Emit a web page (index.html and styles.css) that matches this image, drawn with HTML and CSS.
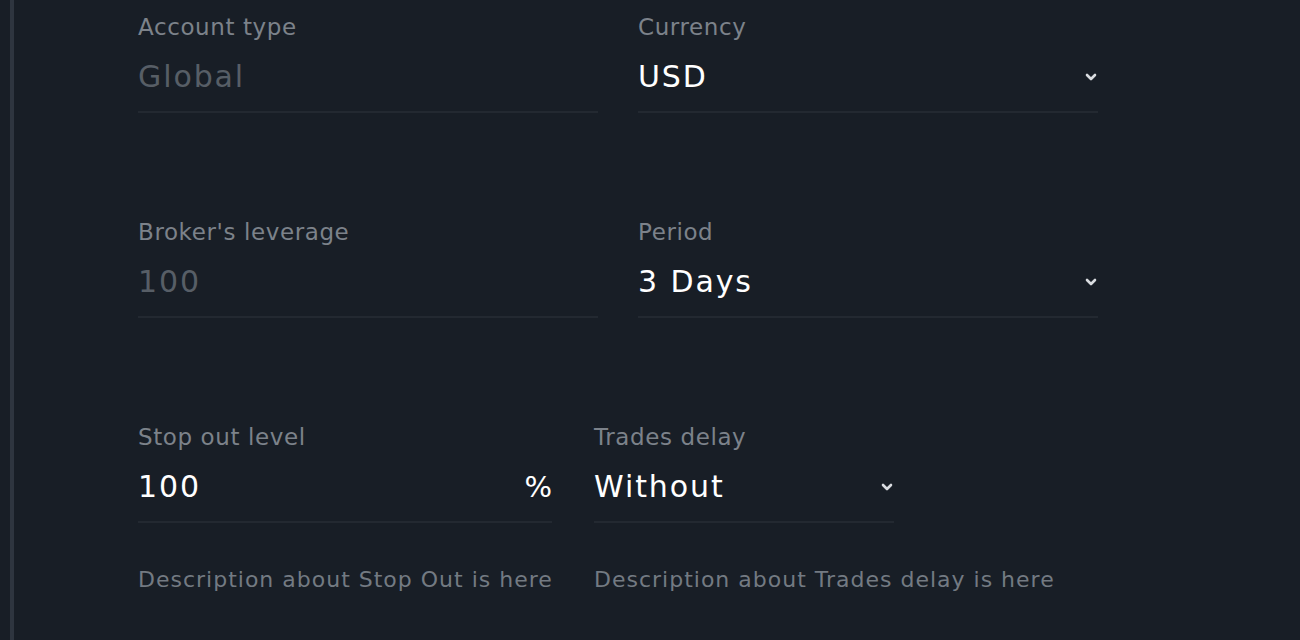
FILE: index.html
```html
<!DOCTYPE html>
<html lang="en">
<head>
<meta charset="utf-8">
<title>Account settings</title>
<link rel="stylesheet" href="styles.css">
</head>
<body>
<div class="frame">
  <form class="form">
    <div class="row row-wide">
      <div class="field">
        <div class="label">Account type</div>
        <div class="control"><span class="value disabled">Global</span></div>
      </div>
      <div class="field">
        <div class="label">Currency</div>
        <div class="control"><span class="value">USD</span>
          <svg class="chev" width="12" height="8" viewBox="0 0 12 8"><polyline points="2,2 6,6 10,2" fill="none" stroke="#d9dce0" stroke-width="2.6" stroke-linecap="round" stroke-linejoin="round"/></svg>
        </div>
      </div>
    </div>
    <div class="row row-wide">
      <div class="field">
        <div class="label">Broker's leverage</div>
        <div class="control"><span class="value disabled">100</span></div>
      </div>
      <div class="field">
        <div class="label">Period</div>
        <div class="control"><span class="value">3 Days</span>
          <svg class="chev" width="12" height="8" viewBox="0 0 12 8"><polyline points="2,2 6,6 10,2" fill="none" stroke="#d9dce0" stroke-width="2.6" stroke-linecap="round" stroke-linejoin="round"/></svg>
        </div>
      </div>
    </div>
    <div class="row row-narrow">
      <div class="field">
        <div class="label">Stop out level</div>
        <div class="control"><span class="value">100</span><span class="unit">%</span></div>
        <div class="desc">Description about Stop Out is here</div>
      </div>
      <div class="field">
        <div class="label">Trades delay</div>
        <div class="control"><span class="value">Without</span>
          <svg class="chev" width="12" height="8" viewBox="0 0 12 8"><polyline points="2,2 6,6 10,2" fill="none" stroke="#d9dce0" stroke-width="2.6" stroke-linecap="round" stroke-linejoin="round"/></svg>
        </div>
        <div class="desc">Description about Trades delay is here</div>
      </div>
    </div>
  </form>
</div>
</body>
</html>
```
FILE: styles.css
```css
html, body {
  margin: 0;
  padding: 0;
  background: #181e26;
  height: 100%;
}
body {
  font-family: "DejaVu Sans", "Open Sans", sans-serif;
  overflow: hidden;
}
.frame {
  margin-left: 10px;
  border-left: 4px solid #2e353f;
  min-height: 640px;
  box-sizing: border-box;
  padding: 14px 0 0 124px;
}
.form {
  display: flex;
  flex-direction: column;
  gap: 106px;
}
.row {
  display: grid;
}
.row-wide {
  grid-template-columns: 460px 460px;
  column-gap: 40px;
}
.row-narrow {
  grid-template-columns: 414px 300px;
  column-gap: 42px;
}
.label {
  font-size: 23px;
  line-height: 26px;
  color: #7c828a;
  letter-spacing: 0.6px;
  white-space: nowrap;
}
.control {
  display: flex;
  align-items: center;
  justify-content: space-between;
  margin-top: 17px;
  height: 40px;
  padding-bottom: 14px;
  border-bottom: 2px solid #232931;
}
.value {
  font-size: 30px;
  line-height: 40px;
  color: #ffffff;
  letter-spacing: 1.9px;
  white-space: nowrap;
}
.value.disabled {
  color: #575e66;
}
.unit {
  font-size: 29px;
  color: #ffffff;
}
.chev {
  margin-right: 1px;
  flex: none;
}
.desc {
  margin-top: 44px;
  font-size: 22px;
  line-height: 26px;
  color: #737a82;
  letter-spacing: 1px;
  white-space: nowrap;
}
```
